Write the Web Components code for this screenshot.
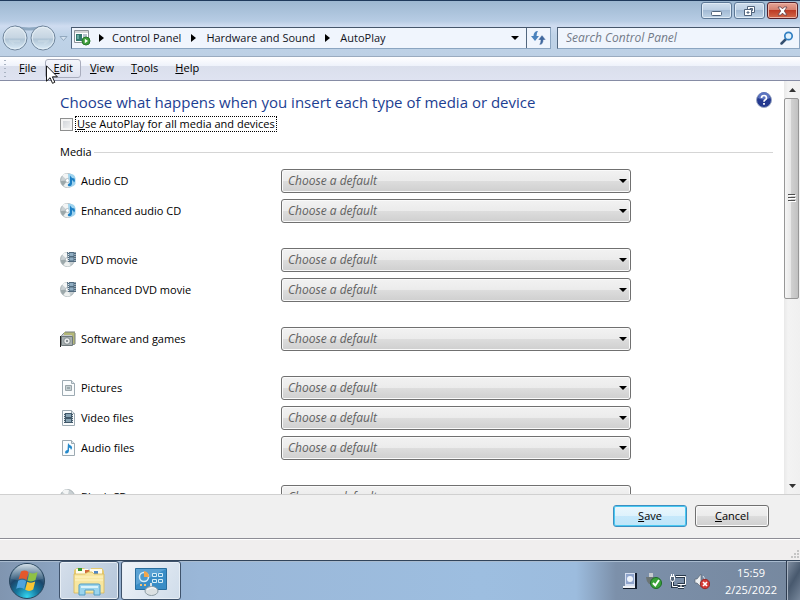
<!DOCTYPE html>
<html lang="en">
<head>
<meta charset="utf-8">
<title>AutoPlay</title>
<style>
  html, body {
    height: 100%;
    margin: 0;
  }

  body {
    display: flex;
    flex-direction: column;
    overflow: hidden;
    font: 11px/16px "Open Sans", "Noto Sans", sans-serif;
    color: #000;
  }
</style>
</head>
<body>
<explorer-window>
  <title-bar slot="frame"></title-bar>
  <address-bar slot="frame"></address-bar>
  <menu-bar slot="frame"></menu-bar>
  <autoplay-page></autoplay-page>
  <action-bar slot="footer"></action-bar>
</explorer-window>
<task-bar></task-bar>
<mouse-pointer></mouse-pointer>

<script>
function makeTemplate(html) {
  const template = document.createElement('template');
  template.innerHTML = html;
  return template;
}

class BaseElement extends HTMLElement {
  constructor() {
    super();
    this.attachShadow({ mode: 'open' });
    this.shadowRoot.appendChild(this.constructor.template.content.cloneNode(true));
  }
}

/* window */

class ExplorerWindow extends BaseElement {
  static template = makeTemplate(`
    <style>
      :host {
        flex: 1;
        min-height: 0;
        display: flex;
        flex-direction: column;
        background: #fff;
      }
      .frame {
        border-top: 1px solid #1f3a5c;
        background: linear-gradient(#9db8d1, #b7cce4 20px, #cfdcf0 25px, #bfd3e8 34px, #bacde1);
      }
      main {
        flex: 1;
        min-height: 0;
        display: flex;
      }
    </style>
    <div class="frame"><slot name="frame"></slot></div>
    <main><slot></slot></main>
    <slot name="footer"></slot>
  `);
}

class TitleBar extends BaseElement {
  static template = makeTemplate(`
    <style>
      :host {
        display: flex;
        justify-content: flex-end;
        gap: 2px;
        height: 20px;
        padding: 1px 2px 0 0;
      }
      button {
        width: 31px;
        height: 17px;
        padding: 0;
        display: flex;
        align-items: center;
        justify-content: center;
        border: 1px solid #5d7896;
        border-radius: 3px;
        background: linear-gradient(#cfdeed, #b9cde2 50%, #a2bad4 50%, #bfd3e6);
        box-shadow: inset 0 0 0 1px #dfebf6;
      }
      .close {
        border-color: #54202a;
        background: linear-gradient(#e5a496, #d37c6b 50%, #bd3b25 50%, #d2694a);
        box-shadow: inset 0 0 0 1px #edb5a8;
      }
    </style>
    <button aria-label="Minimize">
      <svg width="13" height="12" viewBox="0 0 13 12"><rect x="1.5" y="6.5" width="10" height="4" rx="1" fill="#fff" stroke="#51647c"/></svg>
    </button>
    <button aria-label="Restore">
      <svg width="13" height="12" viewBox="0 0 13 12" fill="#fff" stroke="#51647c"><path d="M4.5 1.5h7v6h-7z"/><path d="M7 3.5h2.5v2H7z" fill="#a9bfd8"/><path d="M1.5 4.5h7v6h-7z"/><path d="M4 7h2v1H4z" fill="#a9bfd8"/></svg>
    </button>
    <button class="close" aria-label="Close">
      <svg width="13" height="12" viewBox="0 0 13 12"><path d="M2 2h3l1.500 2L8 2h3L8.300 6 11 10H8L6.500 8 5 10H2l2.700-4z" fill="#fff" stroke="#674048" stroke-width=".8"/></svg>
    </button>
  `);
}

class AddressBar extends BaseElement {
  static template = makeTemplate(`
    <style>
      :host {
        display: flex;
        align-items: center;
        height: 32px;
        padding: 0 0 0 2px;
        margin-bottom: 2px;
      }
      .history {
        width: 69px;
        flex: none;
        height: 28px;
      }
      .address, .search {
        box-sizing: border-box;
        height: 22px;
        display: flex;
        align-items: center;
        border: 1px solid #8ba5c1;
        border-top-color: #46566b;
        border-left-color: #52677f;
        background: #f0f5fd;
      }
      .address {
        flex: 1;
        min-width: 0;
      }
      nav {
        flex: 1;
        display: flex;
        align-items: center;
        padding-left: 2px;
      }
      nav svg {
        flex: none;
      }
      a {
        color: #10131c;
        text-decoration: none;
        white-space: nowrap;
      }
      .arrow {
        width: 5px;
        height: 8px;
        margin: 0 10px;
      }
      .arrow.first {
        margin: 0 8px;
      }
      button {
        border: 0;
        padding: 0;
        background: none;
        display: flex;
        align-items: center;
        justify-content: center;
      }
      .drop {
        width: 22px;
        height: 20px;
      }
      .refresh {
        width: 24px;
        height: 20px;
        border-left: 1px solid #52677f;
      }
      .search {
        flex: 0 1 243px;
        margin-left: 6px;
      }
      input {
        flex: 1;
        min-width: 0;
        padding: 0 0 0 8px;
        border: 0;
        outline: 0;
        background: none;
        font: italic 12px/16px "Open Sans", "Noto Sans", sans-serif;
      }
      input::placeholder {
        color: #737a88;
      }
      .go {
        width: 24px;
      }
    </style>
    <svg class="history" viewBox="0 0 69 28">
      <defs>
        <linearGradient id="ball" x2="0" y2="1"><stop stop-color="#dde6ee"/><stop offset=".48" stop-color="#c6d5e2"/><stop offset=".55" stop-color="#b0c5d6"/><stop offset="1" stop-color="#dcecf8"/></linearGradient>
      </defs>
      <path d="M13 1.500q14 4 28 0v4q-14 2-28 0z" fill="#8ea8c1"/>
      <g fill="url(#ball)" stroke="#71869c"><circle cx="13" cy="14" r="12"/><circle cx="41" cy="14" r="12"/></g>
      <g fill="none" stroke="#e9f2f9" stroke-opacity=".8"><circle cx="13" cy="14" r="10.800"/><circle cx="41" cy="14" r="10.800"/></g>
      <path d="M7 16l5 4M7 17h11M47 16l-5 4M36 17h11" stroke="#dbe7f0" stroke-opacity=".3" stroke-width="2" fill="none"/>
      <path d="M58 12.500h7l-3.500 4z" fill="#d6e4f1" stroke="#93a9bf"/>
    </svg>
    <div class="address">
      <nav aria-label="Location">
        <svg width="17" height="16" viewBox="0 0 17 16"><path d="M.5.5h14v12H.5z" fill="#fff" stroke="#8b9299"/><path d="M1 1h13v2H1z" fill="#d4d5d7"/><path d="M2 4h6v7H2z" fill="#34786f"/><path d="M3 5h2v4H3z" fill="#69aaa0"/><path d="M9 4h4v3H9z" fill="#b7c1ce"/><circle cx="12" cy="11" r="4" fill="#3e9d3b" stroke="#26782c"/><path d="M10.800 8.800v4.400L14 11z" fill="#fff"/></svg>
        <svg class="arrow first" viewBox="0 0 5 8"><path d="M0 0l5 4-5 4z"/></svg>
        <a href="#control-panel">Control Panel</a>
        <svg class="arrow" viewBox="0 0 5 8"><path d="M0 0l5 4-5 4z"/></svg>
        <a href="#hardware">Hardware and Sound</a>
        <svg class="arrow" viewBox="0 0 5 8"><path d="M0 0l5 4-5 4z"/></svg>
        <a href="#autoplay">AutoPlay</a>
      </nav>
      <button class="drop" aria-label="Previous locations"><svg width="8" height="4" viewBox="0 0 8 4"><path d="M0 0h8L4 4z"/></svg></button>
      <button class="refresh" aria-label="Refresh"><svg width="15" height="14" viewBox="0 0 15 14"><path d="M7 0C4 0 2.500 2 2.500 5H0l4 5 4-5H5.500q0-3 1.500-5z" fill="#4a82bd"/><path d="M8 14c3 0 4.500-2 4.500-5H15l-4-5-4 5h2.500q0 3-1.500 5z" fill="#41689e" stroke="#f0f5fd" stroke-width=".5"/></svg></button>
    </div>
    <div class="search">
      <input type="text" aria-label="Search Control Panel" placeholder="Search Control Panel">
      <button class="go" aria-label="Search"><svg width="14" height="14" viewBox="0 0 14 14"><path d="M1.500 12.500L6 8" stroke="#344f70" stroke-width="2.500" stroke-linecap="round"/><circle cx="8.500" cy="5" r="3.700" fill="#e2f2fd" stroke="#327fc2" stroke-width="1.700"/></svg></button>
    </div>
  `);
}

class MenuBar extends BaseElement {
  static template = makeTemplate(`
    <style>
      :host {
        display: flex;
        align-items: center;
        gap: 1px;
        height: 23px;
        padding-left: 4px;
        border-top: 1px solid #9aabbf;
        border-bottom: 1px solid #868ca5;
        background: linear-gradient(#fff, #eef2fb 9px, #dadfec 9px, #dfe3f1);
      }
      .grip {
        width: 2px;
        height: 18px;
        margin-right: 4px;
        background: repeating-linear-gradient(#a9b3c2 0 1px, transparent 1px 4px);
      }
      button {
        box-sizing: border-box;
        height: 19px;
        padding: 0 7px 1px;
        border: 1px solid transparent;
        border-radius: 3px;
        background: none;
        font: inherit;
        color: #000;
      }
      .hot {
        border-color: #a9adbd;
        background: linear-gradient(#f5f6fc, #dfe3f0);
      }
    </style>
    <div class="grip"></div>
    <button><u>F</u>ile</button>
    <button class="hot"><u>E</u>dit</button>
    <button><u>V</u>iew</button>
    <button><u>T</u>ools</button>
    <button><u>H</u>elp</button>
  `);
}

/* page content */

const disc = `
  <circle cx="7.5" cy="7.5" r="7" fill="#c9d0d3" stroke="#9ca7ab" stroke-width=".8"/>
  <path d="M7.500 7.500L2 2.500Q5-.5 9 1z" fill="#f3f5f5"/>
  <path d="M7.500 7.500L3.500 13q4 2.500 7 .5z" fill="#edf0ef"/>
  <path d="M7.500 7.500L.8 8q0 3 2.200 4.700z" fill="#9ca8aa"/>
  <circle cx="7.5" cy="7.5" r="2" fill="#fff" stroke="#a2acb0" stroke-width=".7"/>`;
const sheet = '<path d="M2.500.5h9l3 3v12h-12z" fill="#fafcfd" stroke="#9daab2"/><path d="M11.500.5v3h3" fill="#dde5e9" stroke="#9daab2"/>';

const icons = {
  cd: `${disc}<path d="M8 1q6-1 7.500 4v6q-2 3-6 3z" fill="#9fd3ee"/><path d="M10 2.500q1 2.500 4.500 3 1 2-.5 4-.5-2-2-2.500v4q-.5 2.500-3.500 2.200-2-2 1.500-3.200z" fill="#1c7fc4"/>`,
  dvd: `${disc}<path d="M7 0h9v10H8z" fill="#506a7e"/><path d="M9.500 1h4v3h-4zM9.500 5.500h4v3h-4z" fill="#8fadc2"/><path d="M8.500 0v10M15 0v10" stroke="#dce6ec" stroke-dasharray="1 1"/>`,
  software: '<path d="M1.500 4.500l3-3h10v12h-13z" fill="#c6c9ca" stroke="#848b8c"/><path d="M4 1h11v12h-3V4H4z" fill="#b4b878"/><path d="M5 1h10M15 2v11" stroke="#777f80"/><path d="M1.500 5.500h11v9h-11z" fill="#a7afb0" stroke="#6f797b"/><path d="M.5 5v11" stroke="#222"/><circle cx="7" cy="10" r="3.3" fill="#e8eaea" stroke="#828c8e"/><circle cx="7" cy="10" r="1" fill="#667174"/>',
  picture: `${sheet}<path d="M5.500 5.500h6v5h-6z" fill="#c5cfd2" stroke="#9aa5aa"/><path d="M7 8h3" stroke="#6f8085"/>`,
  video: `${sheet}<path d="M4 3h9v10H4z" fill="#42596a"/><path d="M6 4h5v3H6zM6 9h5v3H6z" fill="#86a2b2"/><path d="M4.500 3v10M12.500 3v10" stroke="#d7e1e6" stroke-dasharray="1 1"/>`,
  audio: `${sheet}<path d="M8 3q1 2 3.500 3 1.500 2-.5 4 0-2-2-2.500V11q-.5 3-3.500 2.500Q4 11 7.500 10z" fill="#2489cb"/>`,
  blank: disc
};

class MediaRow extends BaseElement {
  static template = makeTemplate(`
    <style>
      :host {
        display: grid;
        grid-template-columns: 16px 195px minmax(0, 350px);
        column-gap: 5px;
        align-items: center;
        height: 24px;
        margin-bottom: 6px;
      }
      :host([last]) {
        margin-bottom: 25px;
      }
      .icon {
        width: 16px;
        height: 16px;
      }
      .combo {
        display: grid;
        align-items: center;
      }
      .combo > * {
        grid-area: 1 / 1;
      }
      .arrow {
        width: 8px;
        height: 4px;
        margin-right: 4px;
        justify-self: end;
        pointer-events: none;
      }
      select {
        appearance: none;
        box-sizing: border-box;
        width: 100%;
        height: 24px;
        padding: 0 20px 0 6px;
        border: 1px solid #707070;
        border-radius: 3px;
        background: linear-gradient(#f2f2f2, #ebebeb 50%, #dddddd 50%, #cfcfcf);
        box-shadow: inset 0 0 0 1px #fafafa;
        font: italic 12px/16px "Open Sans", "Noto Sans", sans-serif;
        color: #616161;
      }
    </style>
    <svg class="icon" viewBox="0 0 16 16"></svg>
    <label for="choice"><slot></slot></label>
    <div class="combo">
      <select id="choice"><option>Choose a default</option></select>
      <svg class="arrow" viewBox="0 0 8 4"><path d="M0 0h8L4 4z"/></svg>
    </div>
  `);

  connectedCallback() {
    this.shadowRoot.querySelector('.icon').innerHTML = icons[this.getAttribute('icon')];
  }
}

class AutoplayPage extends BaseElement {
  static template = makeTemplate(`
    <style>
      :host {
        flex: 1;
        min-width: 0;
        display: flex;
      }
      .content {
        flex: 1;
        min-width: 0;
        overflow: hidden;
        padding: 10px 11px 0 60px;
      }
      header {
        display: flex;
        justify-content: space-between;
      }
      h1 {
        margin: 0;
        font-size: 15px;
        line-height: 22px;
        font-weight: 400;
        color: #1c3e92;
      }
      .help {
        width: 18px;
        height: 18px;
        padding: 0;
        border: 0;
        background: none;
      }
      .all {
        display: flex;
        align-items: center;
        gap: 2px;
        height: 22px;
      }
      .all input {
        appearance: none;
        box-sizing: border-box;
        width: 13px;
        height: 13px;
        margin: 0;
        border: 1px solid #8e8f8f;
        background: linear-gradient(135deg, #cbcfd5, #f6f6f6);
        box-shadow: inset 0 0 0 2px #f4f4f4;
      }
      .all label {
        outline: 1px dotted #000;
        outline-offset: -1px;
        padding: 0 2px;
      }
      h2 {
        display: flex;
        align-items: center;
        gap: 2px;
        margin: 9px 0;
        font-size: 11px;
        font-weight: 400;
        line-height: 16px;
      }
      h2::after {
        content: "";
        flex: 1;
        height: 1px;
        background: #d5d5d5;
      }
    </style>
    <div class="content">
      <header>
        <h1>Choose what happens when you insert each type of media or device</h1>
        <button class="help" aria-label="Help"><svg width="18" height="18" viewBox="0 0 18 18"><circle cx="9" cy="9" r="7.5" fill="#24398f" stroke="#9ba8c5"/><path d="M3 7a6 6 0 0 1 12 0q-6 3-12 0z" fill="#5c74c0"/><path d="M6.500 7q0-2.500 2.500-2.500T11.500 7q0 1.200-1.500 2-1 .6-1 1.800" fill="none" stroke="#fff" stroke-width="1.700"/><path d="M8.100 12h1.800v1.800H8.100z" fill="#fff"/></svg></button>
      </header>
      <div class="all">
        <input type="checkbox" id="all">
        <label for="all"><u>U</u>se AutoPlay for all media and devices</label>
      </div>
      <h2>Media</h2>
      <media-row icon="cd">Audio CD</media-row>
      <media-row icon="cd" last>Enhanced audio CD</media-row>
      <media-row icon="dvd">DVD movie</media-row>
      <media-row icon="dvd" last>Enhanced DVD movie</media-row>
      <media-row icon="software" last>Software and games</media-row>
      <media-row icon="picture">Pictures</media-row>
      <media-row icon="video">Video files</media-row>
      <media-row icon="audio" last>Audio files</media-row>
      <media-row icon="blank">Blank CD</media-row>
    </div>
    <scroll-track></scroll-track>
  `);
}

class ScrollTrack extends BaseElement {
  static template = makeTemplate(`
    <style>
      :host {
        flex: none;
        width: 16px;
        display: flex;
        flex-direction: column;
        background: linear-gradient(90deg, #e9e9e9, #f3f3f3 4px, #f0f0f0);
      }
      button {
        height: 17px;
        padding: 0;
        border: 0;
        background: none;
        display: flex;
        align-items: center;
        justify-content: center;
      }
      .track {
        flex: 1;
      }
      .thumb {
        box-sizing: border-box;
        height: 53%;
        margin-right: 1px;
        display: flex;
        align-items: center;
        justify-content: center;
        border: 1px solid #979797;
        border-radius: 2px;
        background: linear-gradient(90deg, #f5f5f5, #e6e6e6 50%, #d0d0d0 50%, #c1c1c1);
      }
    </style>
    <button aria-label="Scroll up"><svg width="7" height="4" viewBox="0 0 7 4"><path d="M0 4h7L3.500 0z" fill="#333"/></svg></button>
    <div class="track">
      <div class="thumb"><svg width="8" height="8" viewBox="0 0 8 8"><path d="M0 .5h7M0 3.500h7M0 6.500h7" stroke="#4e4e4e"/><path d="M1 1.500h7M1 4.500h7M1 7.500h7" stroke="#fff"/></svg></div>
    </div>
    <button aria-label="Scroll down"><svg width="7" height="4" viewBox="0 0 7 4"><path d="M0 0h7L3.500 4z" fill="#333"/></svg></button>
  `);
}

class ActionBar extends BaseElement {
  static template = makeTemplate(`
    <style>
      :host {
        display: block;
        background: #f0f0f0;
        border-top: 1px solid #d0d0d0;
      }
      .buttons {
        display: flex;
        justify-content: flex-end;
        gap: 8px;
        padding: 10px 31px 11px;
      }
      button {
        box-sizing: border-box;
        width: 74px;
        height: 22px;
        padding: 0;
        border: 1px solid #707070;
        border-radius: 3px;
        background: linear-gradient(#f2f2f2, #ebebeb 50%, #dddddd 50%, #cfcfcf);
        box-shadow: inset 0 0 0 1px #fafafa;
        font: inherit;
        color: #000;
      }
      .default {
        border-color: #3c8fc1;
        background: linear-gradient(#eaf6fd, #def2fc 50%, #c6e8fb 50%, #bfe6f8);
        box-shadow: inset 0 0 0 1px #49c9f2;
      }
      .status {
        display: flex;
        align-items: flex-end;
        justify-content: flex-end;
        height: 21px;
        border-top: 1px solid #8d8d95;
        box-shadow: inset 0 1px #fff;
        background: #f0eeee;
      }
    </style>
    <div class="buttons">
      <button class="default"><u>S</u>ave</button>
      <button><u>C</u>ancel</button>
    </div>
    <div class="status">
      <svg width="10" height="10" viewBox="0 0 10 10" fill="#c5c5c5"><path d="M7 0h2v2H7zM4 3h2v2H4zM7 3h2v2H7zM1 6h2v2H1zM4 6h2v2H4zM7 6h2v2H7z"/></svg>
    </div>
  `);
}

/* task bar */

class TaskBar extends BaseElement {
  static template = makeTemplate(`
    <style>
      :host {
        box-sizing: border-box;
        height: 40px;
        display: flex;
        align-items: stretch;
        border-top: 1px solid #31445b;
        box-shadow: inset 0 1px #a9bbcf;
        background: linear-gradient(90deg, #8095b0, #8fa9c8 10%, #9ab7d8 25%, #9dbee0 60%, #9cbcde 72%, #7c90aa 77%, #76889f);
      }
      button {
        padding: 0;
        border: 0;
        background: none;
        display: flex;
        align-items: center;
        justify-content: center;
      }
      .start {
        width: 54px;
        margin-right: 5px;
      }
      .task {
        width: 60px;
        margin-right: 2px;
        border: 1px solid #3f536c;
        border-radius: 3px;
        background: linear-gradient(120deg, #d5dfeb, #b4c5d9);
        box-shadow: inset 0 0 0 1px #e7eef5;
      }
      .active {
        background: linear-gradient(120deg, #eff3f8, #cfdcea);
      }
      .tray {
        display: flex;
        align-items: center;
        gap: 8px;
        margin-left: auto;
      }
      time {
        width: 60px;
        margin: 0 5px 0 3px;
        text-align: center;
        line-height: 17px;
        color: #fff;
      }
      .desktop {
        width: 14px;
        border-left: 1px solid #2e3c50;
        background: linear-gradient(120deg, #8391a4, #48596e 50%, #76869a);
        box-shadow: inset 1px 1px #a8b4c3;
      }
    </style>
    <button class="start" aria-label="Start">
      <svg width="38" height="38" viewBox="0 0 38 38">
        <defs>
          <radialGradient id="orb" cx=".5" cy=".95" r=".9"><stop stop-color="#35d5ef"/><stop offset=".35" stop-color="#16799f"/><stop offset=".65" stop-color="#1b466a"/><stop offset="1" stop-color="#7796ae"/></radialGradient>
          <linearGradient id="gloss" x2="0" y2="1"><stop stop-color="#d3dfe8"/><stop offset="1" stop-color="#54758f" stop-opacity=".4"/></linearGradient>
        </defs>
        <circle cx="19" cy="19" r="17.5" fill="url(#orb)" stroke="#29465e"/>
        <path d="M3 17a16 15 0 0 1 32 0q-16 4-32 0z" fill="url(#gloss)"/>
        <path d="M13 9.500q4-2 7.500.5l-2 8q-4-2.500-8-.5z" fill="#e4582c"/>
        <path d="M21.500 10.500q4 2 8-.5l-2 8q-4 2.500-8 .5z" fill="#8fc145"/>
        <path d="M10.200 18.800q4-2 8 .2l-2 8q-4-2.500-8-.3z" fill="#4fa3dc"/>
        <path d="M19.200 19.800q4 2 8-.2l-2 8q-4 2.500-8 .2z" fill="#f8c534"/>
      </svg>
    </button>
    <button class="task" aria-label="Windows Explorer">
      <svg width="34" height="32" viewBox="0 0 34 32">
        <path d="M2 5l3-2h7l2 2h5V3h11l2 3v22H2z" fill="#e5ca70"/>
        <path d="M4 4h12v5H4zM18 4h12v5H18z" fill="#fffbe9"/>
        <path d="M6 3h4v3H6z" fill="#3c9a33"/><path d="M13 5h4v3h-4z" fill="#d2683c"/><path d="M22 6h4v3h-4z" fill="#4f86c6"/>
        <path d="M2 9h11l3-2h4l2 2h10v19H2z" fill="#f7e6a0" stroke="#d7b657" stroke-width=".8"/>
        <path d="M3 12h28M3 15h28" stroke="#fff5c8"/>
        <path d="M7 30V20q0-1 2-1h17q2 0 2 1v10h-6v-5h-9v5z" fill="#9bd4ed" stroke="#529dc5"/>
        <path d="M9 22h17" stroke="#dbf3fb" stroke-width="2"/>
      </svg>
    </button>
    <button class="task active" aria-label="Control Panel">
      <svg width="34" height="32" viewBox="0 0 34 32">
        <path d="M1.500 3.500h31v21h-31z" fill="#398dc6" stroke="#276d9e"/>
        <path d="M2 4h30L2 20z" fill="#5aa2d4"/>
        <circle cx="10" cy="12" r="4.500" fill="#4b9bcf" stroke="#d6edf8" stroke-width="1.500"/><path d="M10 12V6a6 6 0 0 1 5 6z" fill="#f1a64b"/>
        <g fill="#3c8fc4" stroke="#d4edf8"><path d="M18.500 8.500h4v3h-4zM24.500 8.500h4v3h-4zM18.500 14.500h4v3h-4zM24.500 14.500h4v3h-4z"/></g>
        <path d="M6 20h2M10 20h2" stroke="#f1c377" stroke-width="2"/>
        <path d="M17 18v6" stroke="#d8e1e5" stroke-width="2"/><ellipse cx="17.500" cy="26" rx="6.500" ry="4.500" fill="#dce1e3" stroke="#8e9da5"/><path d="M13 25q5-4 9-1" stroke="#fff" fill="none"/>
      </svg>
    </button>
    <div class="tray">
      <svg width="16" height="18" viewBox="0 0 16 18"><path d="M3 1h12v16H1v-2h2z" fill="#111b2b"/><path d="M3 1h10v13H3z" fill="#d4def0"/><path d="M4 2h8v10H4z" fill="#8fa4cc"/><circle cx="8" cy="7" r="3" fill="#eef3fb"/><path d="M1 14h12v2H1z" fill="#eef1f5"/></svg>
      <svg width="16" height="18" viewBox="0 0 16 18"><path d="M3 1h4v4H3z" fill="#c8cccf"/><path d="M0 5h8v7H3q-3-3-3-7z" fill="#6b7574"/><circle cx="10" cy="11" r="5.5" fill="#39a339" stroke="#1e6c27"/><path d="M7 11l2.300 2.500L13 8" fill="none" stroke="#fff" stroke-width="2"/></svg>
      <svg width="16" height="18" viewBox="0 0 16 18" fill="none" stroke="#fff"><path d="M5.500 4.500h10v8h-8M8 15.500h6M11 13v2M2.500 9v5.500h5" stroke="#29394b" stroke-width="3"/><path d="M6 4.500h9.500v8h-8M8 15.500h6M11 13v2M2.500 9v5.500h5"/><path d="M.5 4.500h4v3l-1 2h-2l-1-2zM1.500 2v2M3.500 2v2" fill="#57697d"/></svg>
      <svg width="16" height="18" viewBox="0 0 16 18"><path d="M1 7h2l4-5v13l-4-4H1z" fill="#eef0f2" stroke="#5c6876" stroke-width=".7"/><path d="M9 4q2 2 2 5" fill="none" stroke="#dfe4e9"/><circle cx="11" cy="12" r="4.7" fill="#d63b36" stroke="#962b29"/><path d="M9 10l4 4M13 10l-4 4" stroke="#fff" stroke-width="1.700"/></svg>
      <time datetime="2022-02-25T15:59">15:59<br>2/25/2022</time>
    </div>
    <button class="desktop" aria-label="Show desktop"></button>
  `);
}

class MousePointer extends BaseElement {
  static template = makeTemplate(`
    <style>
      :host {
        position: absolute;
        left: 46px;
        top: 65px;
        pointer-events: none;
      }
      svg {
        display: block;
      }
    </style>
    <svg width="12" height="19" viewBox="0 0 12 19"><path d="M.5.8v15.400l3.600-3.500 2.400 5.600 2.300-1-2.400-5.500h5z" fill="#fff" stroke="#000" stroke-width=".9"/></svg>
  `);
}

customElements.define('explorer-window', ExplorerWindow);
customElements.define('title-bar', TitleBar);
customElements.define('address-bar', AddressBar);
customElements.define('menu-bar', MenuBar);
customElements.define('media-row', MediaRow);
customElements.define('scroll-track', ScrollTrack);
customElements.define('autoplay-page', AutoplayPage);
customElements.define('action-bar', ActionBar);
customElements.define('task-bar', TaskBar);
customElements.define('mouse-pointer', MousePointer);
</script>
</body>
</html>
